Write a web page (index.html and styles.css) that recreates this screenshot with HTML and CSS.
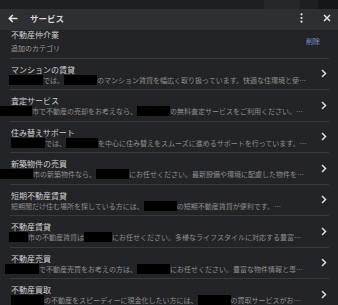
FILE: index.html
```html
<!DOCTYPE html>
<html lang="ja">
<head>
<meta charset="utf-8">
<link rel="stylesheet" href="styles.css">
</head>
<body>
<div class="topstrip"><span class="ts-fill"></span><span class="ts-mid"></span><span class="ts-gap"></span><span class="ts-end"></span></div>
<header class="bar">
  <svg class="back" width="10" height="9" viewBox="0 0 10 9"><path d="M9.5 4.5H1.5M4.8 1L1.3 4.5 4.8 8" fill="none" stroke="#e3e3e3" stroke-width="1.6"/></svg>
  <span class="bar-title">サービス</span>
  <span class="spacer"></span>
  <svg class="kebab" width="3" height="10" viewBox="0 0 3 10"><circle cx="1.5" cy="1.3" r="1.1" fill="#e3e3e3"/><circle cx="1.5" cy="5" r="1.1" fill="#e3e3e3"/><circle cx="1.5" cy="8.7" r="1.1" fill="#e3e3e3"/></svg>
  <svg class="close" width="8" height="8" viewBox="0 0 8 8"><path d="M1 1L7 7M7 1L1 7" stroke="#e3e3e3" stroke-width="1.5"/></svg>
</header>
<main class="content">
  <section class="cat">
    <div class="cat-text">
      <div class="cat-title">不動産仲介業</div>
      <div class="cat-sub">追加のカテゴリ</div>
    </div>
    <span class="del">削除</span>
  </section>
  <div class="sep"></div>
  <div class="row">
    <div class="row-text">
      <div class="title">マンションの賃貸</div>
      <div class="desc"><span class="rd w34 ml-2"></span>では、<span class="rd w33"></span>のマンション賃貸を幅広く取り扱っています。快適な住環境と使いやすさを重視した物件をご紹介します。</div>
    </div>
    <svg class="chev" width="6" height="9" viewBox="0 0 6 9"><path d="M1 1L4.5 4.5 1 8" fill="none" stroke="#d6d6d6" stroke-width="1.6"/></svg>
  </div>
  <div class="sep"></div>
  <div class="row">
    <div class="row-text">
      <div class="title">査定サービス</div>
      <div class="desc"><span class="rd w32 ml-11"></span>市で不動産の売却をお考えなら、<span class="rd w33"></span>の無料査定サービスをご利用ください。市場価格を正確に査定します。</div>
    </div>
    <svg class="chev" width="6" height="9" viewBox="0 0 6 9"><path d="M1 1L4.5 4.5 1 8" fill="none" stroke="#d6d6d6" stroke-width="1.6"/></svg>
  </div>
  <div class="sep"></div>
  <div class="row">
    <div class="row-text">
      <div class="title">住み替えサポート</div>
      <div class="desc"><span class="rd w34"></span>では、<span class="rd w32"></span>を中心に住み替えをスムーズに進めるサポートを行っています。売却と購入を同時に進めます。</div>
    </div>
    <svg class="chev" width="6" height="9" viewBox="0 0 6 9"><path d="M1 1L4.5 4.5 1 8" fill="none" stroke="#d6d6d6" stroke-width="1.6"/></svg>
  </div>
  <div class="sep"></div>
  <div class="row">
    <div class="row-text">
      <div class="title">新築物件の売買</div>
      <div class="desc"><span class="rd w33 ml-11"></span>市の新築物件なら、<span class="rd w33"></span>にお任せください。最新設備や環境に配慮した物件を豊富にご用意しています。</div>
    </div>
    <svg class="chev" width="6" height="9" viewBox="0 0 6 9"><path d="M1 1L4.5 4.5 1 8" fill="none" stroke="#d6d6d6" stroke-width="1.6"/></svg>
  </div>
  <div class="sep"></div>
  <div class="row">
    <div class="row-text">
      <div class="title">短期不動産賃貸</div>
      <div class="desc">短期間だけ住む場所を探している方には、<span class="rd w33"></span>の短期不動産賃貸が便利です。<span class="rd w33"></span></div>
    </div>
    <svg class="chev" width="6" height="9" viewBox="0 0 6 9"><path d="M1 1L4.5 4.5 1 8" fill="none" stroke="#d6d6d6" stroke-width="1.6"/></svg>
  </div>
  <div class="sep"></div>
  <div class="row">
    <div class="row-text">
      <div class="title">不動産賃貸</div>
      <div class="desc"><span class="rd w19 ml-2"></span>市の不動産賃貸は<span class="rd w28"></span>にお任せください。多様なライフスタイルに対応する豊富な物件をご紹介します。</div>
    </div>
    <svg class="chev" width="6" height="9" viewBox="0 0 6 9"><path d="M1 1L4.5 4.5 1 8" fill="none" stroke="#d6d6d6" stroke-width="1.6"/></svg>
  </div>
  <div class="sep"></div>
  <div class="row">
    <div class="row-text">
      <div class="title">不動産売買</div>
      <div class="desc"><span class="rd w34 ml-6"></span>で不動産売買をお考えの方は、<span class="rd w33"></span>にお任せください。豊富な物件情報と専門スタッフがサポートします。</div>
    </div>
    <svg class="chev" width="6" height="9" viewBox="0 0 6 9"><path d="M1 1L4.5 4.5 1 8" fill="none" stroke="#d6d6d6" stroke-width="1.6"/></svg>
  </div>
  <div class="sep"></div>
  <div class="row">
    <div class="row-text">
      <div class="title">不動産買取</div>
      <div class="desc"><span class="rd w33"></span>の不動産をスピーディーに現金化したい方には、<span class="rd w33"></span>の買取サービスがおすすめです。</div>
    </div>
    <svg class="chev" width="6" height="9" viewBox="0 0 6 9"><path d="M1 1L4.5 4.5 1 8" fill="none" stroke="#d6d6d6" stroke-width="1.6"/></svg>
  </div>
</main>
</body>
</html>
```
FILE: styles.css
```css
html, body {
  margin: 0;
  padding: 0;
  height: 100%;
  overflow: hidden;
}
body {
  background: #232427;
  font-family: "Noto Sans CJK JP", "Noto Sans", sans-serif;
  color: #dcdcdc;
}
.topstrip {
  height: 9px;
  display: flex;
  background: #1e1f22;
}
.ts-fill { flex: 1; }
.ts-mid { width: 36px; background: #262729; }
.ts-gap { width: 18px; }
.ts-end { width: 20px; background: #151618; }
.bar {
  height: 21px;
  background: #2e2f32;
  display: flex;
  align-items: center;
  padding: 0 7px 0 8px;
}
.back { margin-top: -2px; }
.bar-title {
  margin-left: 12px;
  font-size: 8.5px;
  font-weight: 700;
  color: #d8d8d8;
  line-height: 10px;
  margin-top: -3px;
}
.spacer { flex: 1; }
.kebab { margin-top: -3px; }
.close { margin-left: 20px; margin-top: -3px; }
.content {
  display: flex;
  flex-direction: column;
}
.cat {
  display: flex;
  align-items: center;
  padding: 0 18px 4px 11px;
  height: 23.5px;
}
.cat-text { flex: 1; }
.cat-title {
  font-size: 8px;
  line-height: 10px;
  color: #cdcdcd;
}
.cat-sub {
  font-size: 7px;
  line-height: 10px;
  margin-top: 3px;
  color: #9e9e9e;
}
.del {
  font-size: 7px;
  color: #7896c6;
  margin-top: -2px;
}
.sep {
  height: 1px;
  background: #38393c;
  margin: 0 9px 0 10px;
}
.row {
  height: 30.5px;
  display: flex;
  align-items: center;
}
.row-text {
  flex: 1;
  min-width: 0;
  padding-top: 2px;
}
.title {
  padding-left: 11px;
  font-size: 8px;
  line-height: 11px;
  font-weight: 400;
  color: #d0d0d0;
}
.desc {
  padding-left: 11px;
  font-size: 7px;
  line-height: 11px;
  color: #8e8e8e;
  white-space: nowrap;
  overflow: hidden;
  text-overflow: ellipsis;
}
.rd {
  display: inline-block;
  height: 10px;
  background: #000;
  vertical-align: -2px;
}
.w19 { width: 19px; }
.w28 { width: 28px; }
.w32 { width: 32px; }
.w33 { width: 33px; }
.w34 { width: 34px; }
.ml-2 { margin-left: -2px; }
.ml-6 { margin-left: -6px; }
.ml-11 { margin-left: -11px; }
.chev {
  margin: 0 11px 0 14px;
}
```
